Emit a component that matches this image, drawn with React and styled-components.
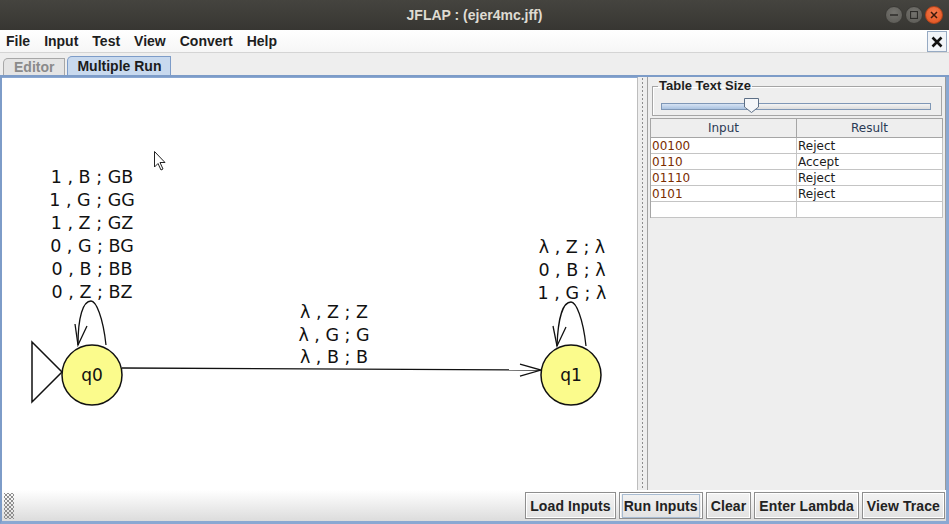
import React from "react";
import styled, { createGlobalStyle } from "styled-components";

const rows = [
  { input: "00100", result: "Reject" },
  { input: "0110", result: "Accept" },
  { input: "01110", result: "Reject" },
  { input: "0101", result: "Reject" },
  { input: "", result: "" },
];

const menus = ["File", "Input", "Test", "View", "Convert", "Help"];
const actions = ["Load Inputs", "Run Inputs", "Clear", "Enter Lambda", "View Trace"];

const q0Labels = ["1 , B ; GB", "1 , G ; GG", "1 , Z ; GZ", "0 , G ; BG", "0 , B ; BB", "0 , Z ; BZ"];
const q1Labels = ["λ , Z ; λ", "0 , B ; λ", "1 , G ; λ"];
const edgeLabels = ["λ , Z ; Z", "λ , G ; G", "λ , B ; B"];

const GlobalStyle = createGlobalStyle`
  html, body {
    margin: 0;
    padding: 0;
    overflow: hidden;
    background: #3c3b37;
  }
`;

const Window = styled.div`
  width: 949px;
  height: 524px;
  display: flex;
  flex-direction: column;
  background: #eeeeee;
  font-family: "Liberation Sans", Arial, sans-serif;
`;

const TitleBar = styled.div`
  height: 30px;
  flex: none;
  display: flex;
  align-items: center;
  justify-content: center;
  position: relative;
  background: linear-gradient(#45443f, #373632);
  color: #dfdbd2;
  font-weight: bold;
  font-size: 14px;
`;

const WindowButtons = styled.div`
  position: absolute;
  right: 6px;
  top: 6px;
  display: flex;
  gap: 2px;
`;

const RoundButton = styled.div`
  width: 18px;
  height: 18px;
  border-radius: 50%;
  display: flex;
  align-items: center;
  justify-content: center;
  box-sizing: border-box;
  border: 1px solid ${(p) => (p.$close ? "#b2431a" : "#3a3935")};
  background: ${(p) =>
    p.$close
      ? "radial-gradient(circle at 50% 35%, #f47a4c, #e0501c)"
      : "radial-gradient(circle at 50% 35%, #75746f, #595853)"};
`;

const MenuBar = styled.div`
  height: 23px;
  flex: none;
  display: flex;
  align-items: center;
  padding-left: 6px;
  background: linear-gradient(#ffffff, #f6f6f6);
  border-bottom: 1px solid #d4d4d4;
  box-sizing: border-box;
  position: relative;
`;

const MenuItem = styled.span`
  font-size: 14px;
  font-weight: bold;
  color: #1e1e1e;
  margin-right: 14px;
`;

const CloseBox = styled.div`
  position: absolute;
  right: 2px;
  top: 1px;
  width: 20px;
  height: 21px;
  box-sizing: border-box;
  border: 1px solid #96aac3;
  background: #f1f4f8;
  display: flex;
  align-items: center;
  justify-content: center;
`;

const TabStrip = styled.div`
  height: 22px;
  flex: none;
  display: flex;
  align-items: flex-end;
  padding-left: 3px;
  background: #eeeeee;
  border-bottom: 2px solid #7d9cc8;
`;

const Tab = styled.div`
  height: ${(p) => (p.$active ? "19px" : "17px")};
  box-sizing: border-box;
  padding: 0 ${(p) => (p.$active ? "9px" : "10px")};
  margin-right: 2px;
  display: flex;
  align-items: center;
  font-size: 14px;
  font-weight: bold;
  color: ${(p) => (p.$active ? "#1c1c1c" : "#8a8a8a")};
  background: ${(p) => (p.$active ? "#c8d9ee" : "#e4e4e4")};
  border: 1px solid ${(p) => (p.$active ? "#7d9cc8" : "#a7a7a7")};
  border-bottom: none;
  border-top-left-radius: 5px;
`;

const Frame = styled.div`
  flex: 1;
  display: flex;
  flex-direction: column;
  border-left: 2px solid #7d9cc8;
  border-right: 3px solid #8aa8d2;
  border-bottom: 3px solid #8aa8d2;
  min-height: 0;
`;

const Main = styled.div`
  flex: 1;
  display: flex;
  min-height: 0;
  background: #eeeeee;
`;

const Canvas = styled.div`
  width: 635px;
  flex: none;
  background: #ffffff;
  border-top: 1px solid #8aa8d2;
  border-right: 1px solid #bdbdbd;
  overflow: hidden;
`;

const Divider = styled.div`
  width: 9px;
  flex: none;
  background-color: #eeeeee;
  background-image: radial-gradient(circle, #8c8c8c 0.8px, transparent 1px);
  background-size: 9px 4px;
  background-position: 0 0;
  background-repeat: repeat-y;
  border-right: 1px solid #a2a2a2;
`;

const SidePanel = styled.div`
  flex: 1;
  display: flex;
  flex-direction: column;
  padding: 3px 1px 0 1px;
  border-right: 1px solid #9a9a9a;
`;

const Group = styled.fieldset`
  margin: 0 2px 2px 3px;
  padding: 2px 10px 6px 8px;
  border: 1px solid #a5a5a5;
  box-shadow: inset 1px 1px 0 #ffffff;
  height: 26px;
  box-sizing: content-box;
`;

const Legend = styled.legend`
  font-size: 13px;
  font-weight: bold;
  color: #1e1e1e;
  padding: 0 1px;
  margin-left: -3px;
  line-height: 12px;
`;

const SliderTrack = styled.div`
  position: relative;
  height: 5px;
  margin-top: 9px;
  border: 1px solid #7f97b6;
  background: linear-gradient(#f4f4f4, #dcdcdc);
`;

const SliderFill = styled.div`
  height: 100%;
  width: 31%;
  background: linear-gradient(#d6e3f3, #aac2e0);
`;

const Thumb = styled.svg`
  position: absolute;
  left: 81px;
  top: -7px;
`;

const Table = styled.div`
  margin: 0 1px;
  display: grid;
  grid-template-columns: 146px 146px;
  border-left: 1px solid #a5a5a5;
`;

const HeaderCell = styled.div`
  height: 20px;
  box-sizing: border-box;
  display: flex;
  align-items: center;
  justify-content: center;
  font-family: "DejaVu Sans", sans-serif;
  font-size: 12px;
  color: #2b3a55;
  background: #eeeeee;
  border-top: 1px solid #a5a5a5;
  border-right: 1px solid #a5a5a5;
  border-bottom: 1px solid #a5a5a5;
`;

const Cell = styled.div`
  height: 16px;
  box-sizing: border-box;
  padding-left: 1px;
  display: flex;
  align-items: center;
  font-family: "DejaVu Sans", sans-serif;
  font-size: 12px;
  color: ${(p) => (p.$input ? "#7a2c00" : "#1c1c1c")};
  background: #ffffff;
  border-right: 1px solid #c4c4c4;
  border-bottom: 1px solid #c4c4c4;
`;

const BottomBar = styled.div`
  height: 31px;
  flex: none;
  display: flex;
  align-items: center;
  justify-content: space-between;
  padding: 0 1px 0 2px;
  background: linear-gradient(#ffffff, #dcdcdc);
`;

const Grip = styled.div`
  width: 10px;
  height: 26px;
  background-image: radial-gradient(circle, #8a8a8a 0.7px, transparent 0.9px),
    radial-gradient(circle, #8a8a8a 0.7px, transparent 0.9px);
  background-size: 4px 4px;
  background-position: 0 0, 2px 2px;
`;

const Actions = styled.div`
  display: flex;
  gap: 3px;
`;

const Button = styled.div`
  height: 27px;
  box-sizing: border-box;
  padding: 0 4px;
  display: flex;
  align-items: center;
  border: 1px solid #8e8e8e;
  box-shadow: inset 1px 1px 0 #ffffff, inset -1px -1px 0 #ffffff;
  background: linear-gradient(#f3f3f3, #e2e2e2);
  font-size: 14px;
  font-weight: bold;
  color: #222222;
  letter-spacing: 0.1px;
`;

const Focus = styled.span`
  padding: 2px 0;
  outline: ${(p) => (p.$on ? "1px solid #a8bcd2" : "none")};
  outline-offset: 1px;
`;

const Label = ({ lines, x, y, step }) => (
  <text x={x} textAnchor="middle" fontFamily="DejaVu Sans, sans-serif" fontSize="17.5" fill="#111">
    {lines.map((l, i) => (
      <tspan key={l} x={x} y={y + i * step}>
        {l}
      </tspan>
    ))}
  </text>
);

const Head = ({ d }) => <path d={d} fill="none" stroke="#111" strokeWidth="1.3" />;

const Automaton = () => (
  <svg width="635" height="409" viewBox="3 79 635 409">
    <Label lines={q0Labels} x={93} y={184} step={23} />
    <Label lines={q1Labels} x={573} y={254} step={23} />
    <Label lines={edgeLabels} x={335} y={319} step={22.5} />

    <path d="M107 346 C 104 318, 97 302, 92 302 C 84 302, 79 318, 79 346" fill="none" stroke="#111" strokeWidth="1.3" />
    <Head d="M76 325 L79 346 L88 327" />
    <path d="M587 347 C 584 319, 577 303, 572 303 C 564 303, 559 319, 558 347" fill="none" stroke="#111" strokeWidth="1.3" />
    <Head d="M554 327 L558 347 L567 328" />
    <line x1="123" y1="369" x2="542" y2="371" stroke="#111" strokeWidth="1.3" />
    <Head d="M521 365 L542 371 L521 377" />

    <path d="M33 343 L63 373 L33 403 Z" fill="#ffffff" stroke="#111" strokeWidth="1.5" />
    <circle cx="93" cy="376" r="30" fill="#fbfb8c" stroke="#111" strokeWidth="1.5" />
    <circle cx="572" cy="376" r="30" fill="#fbfb8c" stroke="#111" strokeWidth="1.5" />
    <text x="93" y="382" textAnchor="middle" fontFamily="DejaVu Sans, sans-serif" fontSize="17" fill="#111">q0</text>
    <text x="572" y="382" textAnchor="middle" fontFamily="DejaVu Sans, sans-serif" fontSize="17" fill="#111">q1</text>

    <path d="M155.5 152.5 L155.5 168 L159 164.5 L162 171 L164 170 L161 163.5 L166 163.5 Z" fill="#ffffff" stroke="#222" strokeWidth="1" />
  </svg>
);

export default function App() {
  return (
    <>
      <GlobalStyle />
      <Window>
        <TitleBar>
          JFLAP : (ejer4mc.jff)
          <WindowButtons>
            <RoundButton>
              <svg width="8" height="8"><line x1="0" y1="4" x2="8" y2="4" stroke="#2e2d2a" strokeWidth="1.5" /></svg>
            </RoundButton>
            <RoundButton>
              <svg width="8" height="8"><rect x="0.5" y="0.5" width="7" height="7" fill="none" stroke="#2e2d2a" strokeWidth="1.2" /></svg>
            </RoundButton>
            <RoundButton $close>
              <svg width="8" height="8"><path d="M1 1 L7 7 M7 1 L1 7" stroke="#3b1a0c" strokeWidth="1.5" /></svg>
            </RoundButton>
          </WindowButtons>
        </TitleBar>

        <MenuBar>
          {menus.map((m) => (
            <MenuItem key={m}>{m}</MenuItem>
          ))}
          <CloseBox>
            <svg width="12" height="12"><path d="M1.5 1.5 L10.5 10.5 M10.5 1.5 L1.5 10.5" stroke="#111" strokeWidth="2.6" /></svg>
          </CloseBox>
        </MenuBar>

        <TabStrip>
          <Tab>Editor</Tab>
          <Tab $active>Multiple Run</Tab>
        </TabStrip>

        <Frame>
          <Main>
            <Canvas>
              <Automaton />
            </Canvas>
            <Divider />
            <SidePanel>
              <Group>
                <Legend>Table Text Size</Legend>
                <SliderTrack>
                  <SliderFill />
                  <Thumb width="18" height="17" viewBox="0 0 18 17">
                    <path d="M1.5 1.5 H15.5 V10 L8.5 15.5 L1.5 10 Z" fill="#f4f6f9" stroke="#5d6f86" strokeWidth="1" />
                  </Thumb>
                </SliderTrack>
              </Group>
              <Table>
                <HeaderCell>Input</HeaderCell>
                <HeaderCell>Result</HeaderCell>
                {rows.map((r, i) => (
                  <React.Fragment key={i}>
                    <Cell $input>{r.input}</Cell>
                    <Cell>{r.result}</Cell>
                  </React.Fragment>
                ))}
              </Table>
            </SidePanel>
          </Main>
          <BottomBar>
            <Grip />
            <Actions>
              {actions.map((a) => (
                <Button key={a}>
                  <Focus $on={a === "Run Inputs"}>{a}</Focus>
                </Button>
              ))}
            </Actions>
          </BottomBar>
        </Frame>
      </Window>
    </>
  );
}
